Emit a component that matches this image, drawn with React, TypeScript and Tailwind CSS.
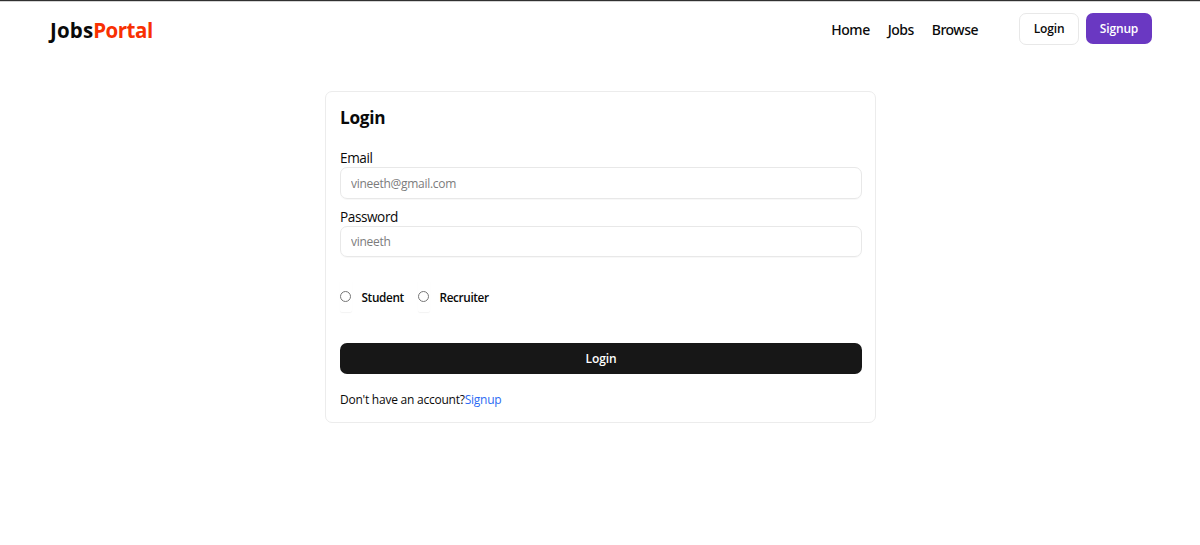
import type { ReactNode } from "react";

function Field({ label, placeholder, type, gap, height }: { label: string; placeholder: string; type: string; gap: string; height: string }) {
  return (
    <label className={`block ${gap}`}>
      <span className="block h-[21px] pt-px text-[13.6px] leading-[21px] tracking-[-0.42px]">{label}</span>
      <input
        type={type}
        placeholder={placeholder}
        className={`block w-full rounded-[7px] border border-[#e8e8e8] px-2.5 text-[12px] tracking-[-0.28px] shadow-[0_1px_1px_rgba(0,0,0,0.03)] outline-none placeholder:text-[#7c7c7c] ${height}`}
      />
    </label>
  );
}

function Role({ children, width }: { children: ReactNode; width: string }) {
  return (
    <label className={`flex items-center ${width}`}>
      <span className="flex h-8 w-3 items-center rounded-[2px] shadow-[0_1px_1px_rgba(0,0,0,0.05)]">
        <input type="radio" name="role" className="m-0 h-[11px] w-[11px] appearance-none rounded-full border border-[#767676] bg-white" />
      </span>
      <span className="ml-[9.5px] pt-0.5 text-[11.8px] font-semibold leading-4 tracking-[-0.38px]">{children}</span>
    </label>
  );
}

export default function App() {
  return (
    <div className="h-[545px] overflow-hidden border-t border-[#303030] bg-white font-['Open_Sans','Noto_Sans',sans-serif] text-[#0a0a0a]">
      <header className="flex h-[55px] items-center justify-between border-t border-[#d4d4d4] pl-[50px] pr-12">
        <h1 className="pt-0.5 text-[20.5px] font-bold leading-7 tracking-[0.15px]">
          Jobs<span className="tracking-[-0.5px] text-[#f83002]">Portal</span>
        </h1>
        <div className="flex items-center">
          <nav className="flex gap-[18px] pt-px font-['Noto_Sans','Open_Sans',sans-serif] text-[14px] font-medium leading-5 tracking-[-0.5px]">
            <a>Home</a>
            <a>Jobs</a>
            <a>Browse</a>
          </nav>
          <div className="ml-[41px] flex gap-[7px] text-[12px] font-semibold">
            <button className="h-8 w-[60px] rounded-[7px] border border-[#e8e8e8] tracking-[-0.15px]">Login</button>
            <button className="h-[31px] w-[66px] rounded-[7px] bg-[#6a38c2] pt-px tracking-[-0.15px] text-white">Signup</button>
          </div>
        </div>
      </header>
      <main className="ml-[325px] mt-[35px] h-[332px] w-[551px] rounded-[7px] border border-[#ececec] pl-3.5 pr-[13px]">
        <h2 className="mt-[13px] pt-px text-[17.2px] font-bold leading-6 tracking-[-0.25px]">Login</h2>
        <Field label="Email" placeholder="vineeth@gmail.com" type="email" gap="mt-[16px]" height="h-8" />
        <Field label="Password" placeholder="vineeth" type="text" gap="mt-[6px]" height="h-[31px]" />
        <div className="mt-[23px] flex h-8">
          <Role width="w-[78px]">Student</Role>
          <Role width="w-[78px]">Recruiter</Role>
        </div>
        <button className="mt-[31px] block h-[31px] w-full rounded-[7px] bg-[#171717] pt-px text-[12px] font-semibold tracking-[-0.1px] text-white">Login</button>
        <p className="mt-[17px] text-[12px] leading-[17px] tracking-[-0.24px]">
          Don't have an account?<a className="text-[#2b6bf3]">Signup</a>
        </p>
      </main>
    </div>
  );
}
